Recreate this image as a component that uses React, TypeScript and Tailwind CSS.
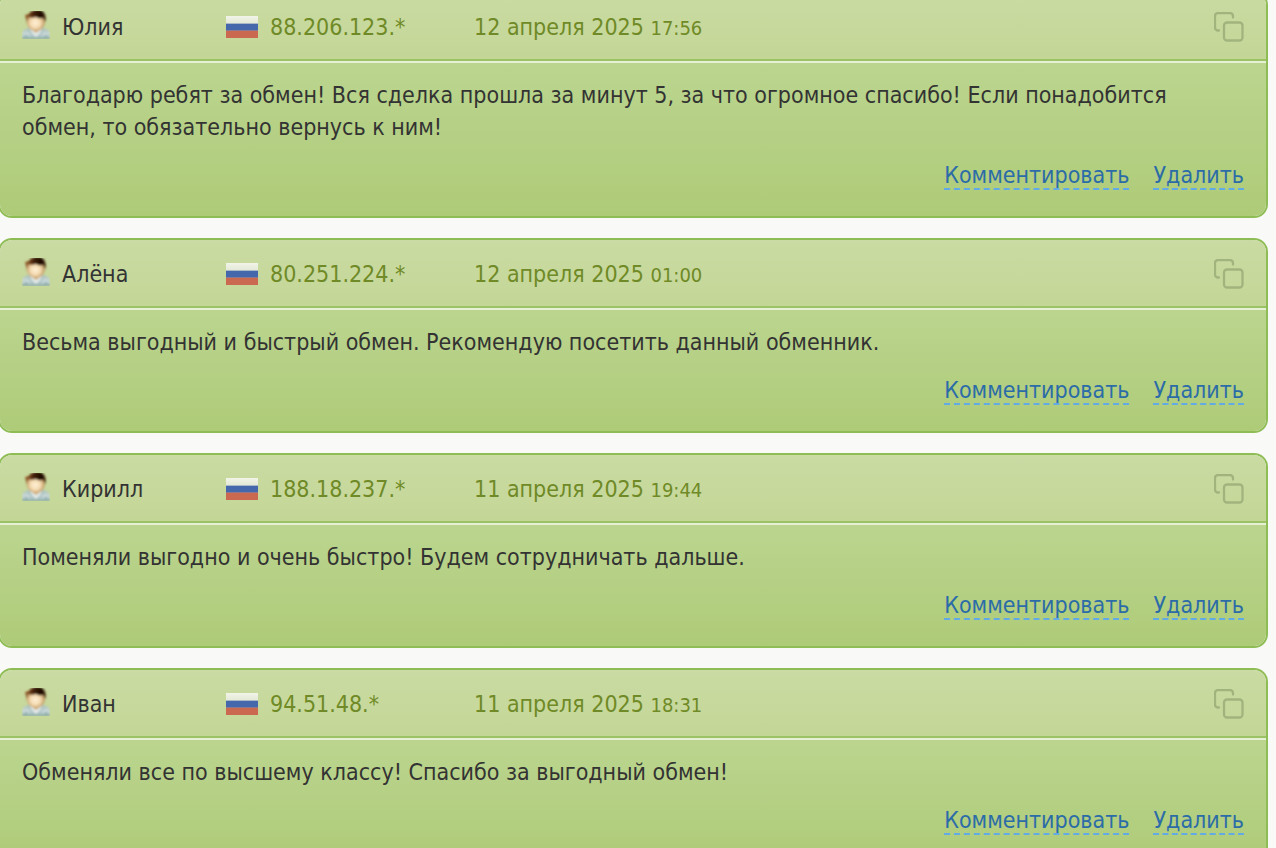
interface Review {
  name: string;
  ip: string;
  date: string;
  time: string;
  text: string;
}

const reviews: Review[] = [
  {
    name: 'Юлия',
    ip: '88.206.123.*',
    date: '12 апреля 2025',
    time: '17:56',
    text: 'Благодарю ребят за обмен! Вся сделка прошла за минут 5, за что огромное спасибо! Если понадобится обмен, то обязательно вернусь к ним!',
  },
  {
    name: 'Алёна',
    ip: '80.251.224.*',
    date: '12 апреля 2025',
    time: '01:00',
    text: 'Весьма выгодный и быстрый обмен. Рекомендую посетить данный обменник.',
  },
  {
    name: 'Кирилл',
    ip: '188.18.237.*',
    date: '11 апреля 2025',
    time: '19:44',
    text: 'Поменяли выгодно и очень быстро! Будем сотрудничать дальше.',
  },
  {
    name: 'Иван',
    ip: '94.51.48.*',
    date: '11 апреля 2025',
    time: '18:31',
    text: 'Обменяли все по высшему классу! Спасибо за выгодный обмен!',
  },
];

const App = () => (
  <div className="h-screen overflow-hidden bg-[#f9f9f8] font-['DejaVu_Sans_Condensed','DejaVu_Sans',sans-serif] text-[23px] leading-8 text-[#333]">
    {/* The list is scrolled a little, so the first card is cut at the top */}
    <main className="-mt-[9px] mr-2 -ml-0.5 flex flex-col gap-5">
      {reviews.map((review) => (
        <ReviewCard key={review.ip} review={review} />
      ))}
    </main>
  </div>
);

const ReviewCard = ({ review }: { review: Review }) => (
  <article className="overflow-hidden rounded-[14px] border-2 border-[#8fbd55]">
    <header className="flex h-[68px] items-center border-b-2 border-[#9bc264] bg-linear-to-b from-[#cadba3] to-[#c4d696] px-[22px] pt-px text-[#6f8a26]">
      <div className="flex w-[204px] items-center gap-3 text-[#333]">
        <Avatar />
        <span>{review.name}</span>
      </div>
      <div className="flex w-[248px] items-center gap-3">
        <Flag />
        <span>{review.ip}</span>
      </div>
      <time>
        {review.date} <span className="text-[20px] leading-none">{review.time}</span>
      </time>
      <button type="button" aria-label="Копировать" className="ml-auto cursor-pointer text-[#a2b47e]">
        <CopyIcon />
      </button>
    </header>
    <div className="border-t-2 border-[#e6f0d5] bg-linear-to-b from-[#bbd58f] to-[#aecb78] px-[22px] pt-4 pb-[26px]">
      <p>{review.text}</p>
      <div className="mt-4 flex justify-end gap-6">
        <ActionLink label="Комментировать" />
        <ActionLink label="Удалить" />
      </div>
    </div>
  </article>
);

const ActionLink = ({ label }: { label: string }) => (
  <a href="#" className="h-[31px] border-b-2 border-dashed border-[#62aae6] text-[#2b6ca8]">
    {label}
  </a>
);

const Avatar = () => (
  <svg className="mb-1" width="28" height="28" viewBox="0 0 28 28" aria-hidden="true">
    <defs>
      <radialGradient id="face" cx="0.48" cy="0.55" r="0.58">
        <stop offset="0" stopColor="#fff0d8" />
        <stop offset="0.5" stopColor="#f3d9ae" />
        <stop offset="1" stopColor="#a67a3e" />
      </radialGradient>
      <linearGradient id="hair" x1="0" y1="0" x2="1" y2="0">
        <stop offset="0" stopColor="#a3652f" />
        <stop offset="0.45" stopColor="#3d1d08" />
        <stop offset="0.8" stopColor="#1d0c03" />
        <stop offset="1" stopColor="#5b3c1c" />
      </linearGradient>
      <linearGradient id="shirt" x1="0" y1="0" x2="0" y2="1">
        <stop offset="0" stopColor="#a9c0b6" />
        <stop offset="0.55" stopColor="#ccdadb" />
        <stop offset="1" stopColor="#93b2ae" />
      </linearGradient>
      <filter id="soft" x="-10%" y="-10%" width="120%" height="120%">
        <feGaussianBlur stdDeviation="0.9" />
      </filter>
    </defs>
    <g filter="url(#soft)">
      <path d="M0 28v-5c0-3 2-5 7-6h14c5 1 7 3 7 6v5z" fill="url(#shirt)" />
      <path d="M4 28v-4M24 28v-4M0 27.500h28" stroke="#87a8a6" strokeWidth="1.5" />
      <path d="M8 18l6 8 6-8z" fill="#e6ecea" />
      <path d="M6 19l5 7M22 19l-5 7" stroke="#9ab7bb" />
      <path d="M9 15h10v3l-5 4-5-4z" fill="#c9a471" />
      <path d="M4.500 10c0-5 4-8 9.500-8s9 3 9 8c0 6-4 10-9 10S4.500 16 4.500 10z" fill="url(#face)" />
      <path d="M4 8L3 4l4-1c1-3 5-4 9-4 6 0 9 5 7.500 12L21 7c-3 0-4 1-7-1-3 1-6 1-8 0L5 11z" fill="url(#hair)" />
    </g>
  </svg>
);

const Flag = () => (
  <svg width="32" height="22" viewBox="0 0 32 22" role="img" aria-label="Россия">
    <defs>
      <linearGradient id="flagWhite" x1="0" y1="0" x2="0" y2="1">
        <stop offset="0" stopColor="#f1f4e7" />
        <stop offset="1" stopColor="#e4e9d8" />
      </linearGradient>
    </defs>
    <path d="M0 0h32v7H0z" fill="url(#flagWhite)" />
    <path d="M0 7h32v1H0z" fill="#a9b9c6" />
    <path d="M0 8h32v6H0z" fill="#4567ac" />
    <path d="M0 14h32v1H0z" fill="#8c7890" />
    <path d="M0 15h32v7H0z" fill="#cb6950" />
  </svg>
);

const CopyIcon = () => (
  <svg
    width="30"
    height="30"
    viewBox="0 0 30 30"
    fill="none"
    stroke="currentColor"
    strokeWidth="2.3"
    strokeLinecap="round"
    aria-hidden="true"
  >
    <rect x="10" y="10.500" width="18.500" height="18" rx="3" />
    <path d="M5 18.500H4a3 3 0 0 1-3-3V4a3 3 0 0 1 3-3h12a3 3 0 0 1 3 3v1.500" />
  </svg>
);

export default App;
